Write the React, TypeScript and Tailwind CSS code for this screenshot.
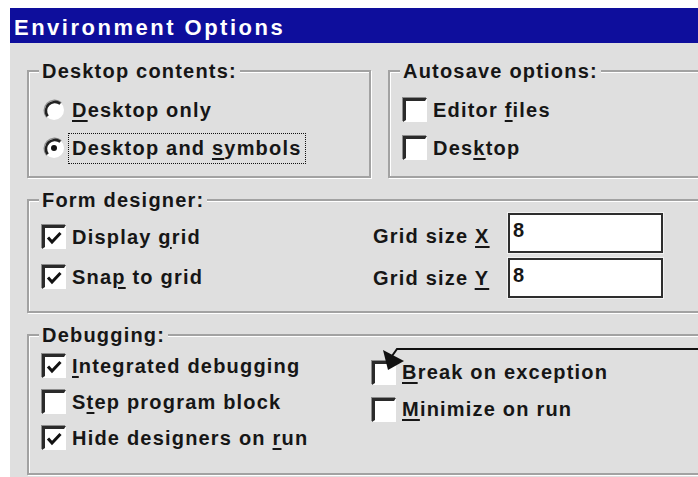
import type { ReactNode } from "react";

function U({ children }: { children: ReactNode }) {
  return <span className="underline decoration-2 underline-offset-[3px]">{children}</span>;
}

function CheckBox({ checked }: { checked?: boolean }) {
  return (
    <span className="flex h-[24px] w-[24px] shrink-0 border-t-[3px] border-l-[3px] border-r-2 border-b-2 border-t-[#2a2a2a] border-l-[#2a2a2a] border-r-white border-b-white bg-white shadow-[-1px_-1px_0_#8c8c8c]">
      {checked && (
        <svg viewBox="0 0 19 19" className="h-full w-full">
          <polyline points="3,9.5 7,14 15.5,5" fill="none" stroke="#111" strokeWidth="3" />
        </svg>
      )}
    </span>
  );
}

function Radio({ checked }: { checked?: boolean }) {
  return (
    <svg width="24" height="24" viewBox="0 0 24 24" className="shrink-0">
      <circle cx="12" cy="12" r="10" fill="#fff" />
      <path d="M4.6 19.4 A10.5 10.5 0 0 1 19.4 4.6" fill="none" stroke="#8c8c8c" strokeWidth="1.2" />
      <path d="M5.7 18.3 A9 9 0 0 1 18.3 5.7" fill="none" stroke="#222" strokeWidth="2.6" />
      {checked && <circle cx="12" cy="12" r="3" fill="#111" />}
    </svg>
  );
}

function Option({
  control,
  focused,
  className,
  children,
}: {
  control: ReactNode;
  focused?: boolean;
  className: string;
  children: ReactNode;
}) {
  return (
    <div className={`flex items-center gap-[2px] ${className}`}>
      {control}
      <span
        className={`border px-[3px] leading-[29px] whitespace-nowrap ${
          focused ? "border-dotted border-[#111]" : "border-transparent"
        }`}
      >
        {children}
      </span>
    </div>
  );
}

function Group({ title, className, children }: { title: string; className: string; children: ReactNode }) {
  return (
    <div
      className={`relative border-2 border-[#a2a2a2] pl-[13px] shadow-[inset_1px_1px_0_#fff,1px_1px_0_#fff] ${className}`}
    >
      <div className="-mt-[13px] -ml-[3px] flex h-[24px]">
        <span className="bg-[#dfdfdf] px-[3px] leading-[24px] whitespace-nowrap">{title}</span>
      </div>
      {children}
    </div>
  );
}

function Field({ value }: { value: string }) {
  return (
    <div className="h-[40px] w-[155px] border-2 border-[#2e2e2e] bg-white pl-[3px] pt-[3px] leading-[24px] shadow-[0_0_0_1px_#f2f2f2]">
      {value}
    </div>
  );
}

export default function App() {
  return (
    <div className="h-[477px] w-[698px] overflow-hidden bg-white pl-[10px] pt-[8px] font-['Liberation_Sans',Arial,sans-serif] text-[#161616]">
      <div className="flex h-full w-[760px] flex-col bg-[#dfdfdf]">
        <div className="flex h-[35px] items-center bg-[#0e0e9c] pl-[4px] pt-[3px] text-[22px] font-bold tracking-[2.5px] text-white">
          Environment Options
        </div>

        <div className="flex flex-col gap-[21px] pl-[17px] pr-[30px] pt-[27px] text-[20px] font-bold tracking-[1.2px]">
          <div className="flex gap-[17px]">
            <Group title="Desktop contents:" className="w-[344px] pb-[9px]">
              <div className="flex flex-col pt-[8px]">
                <Option control={<Radio />} className="h-[38px]">
                  <U>D</U>esktop only
                </Option>
                <Option control={<Radio checked />} focused className="h-[38px]">
                  Desktop and <U>s</U>ymbols
                </Option>
              </div>
            </Group>
            <Group title="Autosave options:" className="flex-1 pb-[9px]">
              <div className="flex flex-col pt-[8px]">
                <Option control={<CheckBox />} className="h-[38px]">
                  Editor <U>f</U>iles
                </Option>
                <Option control={<CheckBox />} className="h-[38px]">
                  Des<U>k</U>top
                </Option>
              </div>
            </Group>
          </div>

          <Group title="Form designer:" className="pb-[13px]">
            <div className="flex">
              <div className="flex w-[331px] flex-col pt-[5px]">
                <Option control={<CheckBox checked />} className="h-[40px]">
                  Display <U>g</U>rid
                </Option>
                <Option control={<CheckBox checked />} className="h-[40px]">
                  Sna<U>p</U> to grid
                </Option>
              </div>
              <div className="flex flex-col gap-[5px] pt-[1px]">
                <div className="flex items-center">
                  <span className="w-[135px] pt-[6px]">
                    Grid size <U>X</U>
                  </span>
                  <Field value="8" />
                </div>
                <div className="flex items-center">
                  <span className="w-[135px]">
                    Grid size <U>Y</U>
                  </span>
                  <Field value="8" />
                </div>
              </div>
            </div>
          </Group>

          <Group title="Debugging:" className="pb-[17px]">
            <div className="flex">
              <div className="flex w-[330px] flex-col pt-[1px]">
                <Option control={<CheckBox checked />} className="h-[36px]">
                  <U>I</U>ntegrated debugging
                </Option>
                <Option control={<CheckBox />} className="h-[36px]">
                  S<U>t</U>ep program block
                </Option>
                <Option control={<CheckBox checked />} className="h-[36px]">
                  Hide designers on <U>r</U>un
                </Option>
              </div>
              <div className="flex flex-col pt-[7px]">
                <Option control={<CheckBox />} className="h-[37px]">
                  <U>B</U>reak on exception
                </Option>
                <Option control={<CheckBox />} className="h-[37px]">
                  <U>M</U>inimize on run
                </Option>
              </div>
            </div>

            {/* pointer leading into the "Break on exception" box */}
            <svg width="400" height="30" viewBox="0 0 400 30" className="absolute left-[353px] top-[10px]">
              <path d="M10 10 L15 3 L400 3" fill="none" stroke="#111" strokeWidth="2" />
              <polygon points="1,4 6,24 22,15" fill="#111" />
            </svg>
          </Group>
        </div>
      </div>
    </div>
  );
}
